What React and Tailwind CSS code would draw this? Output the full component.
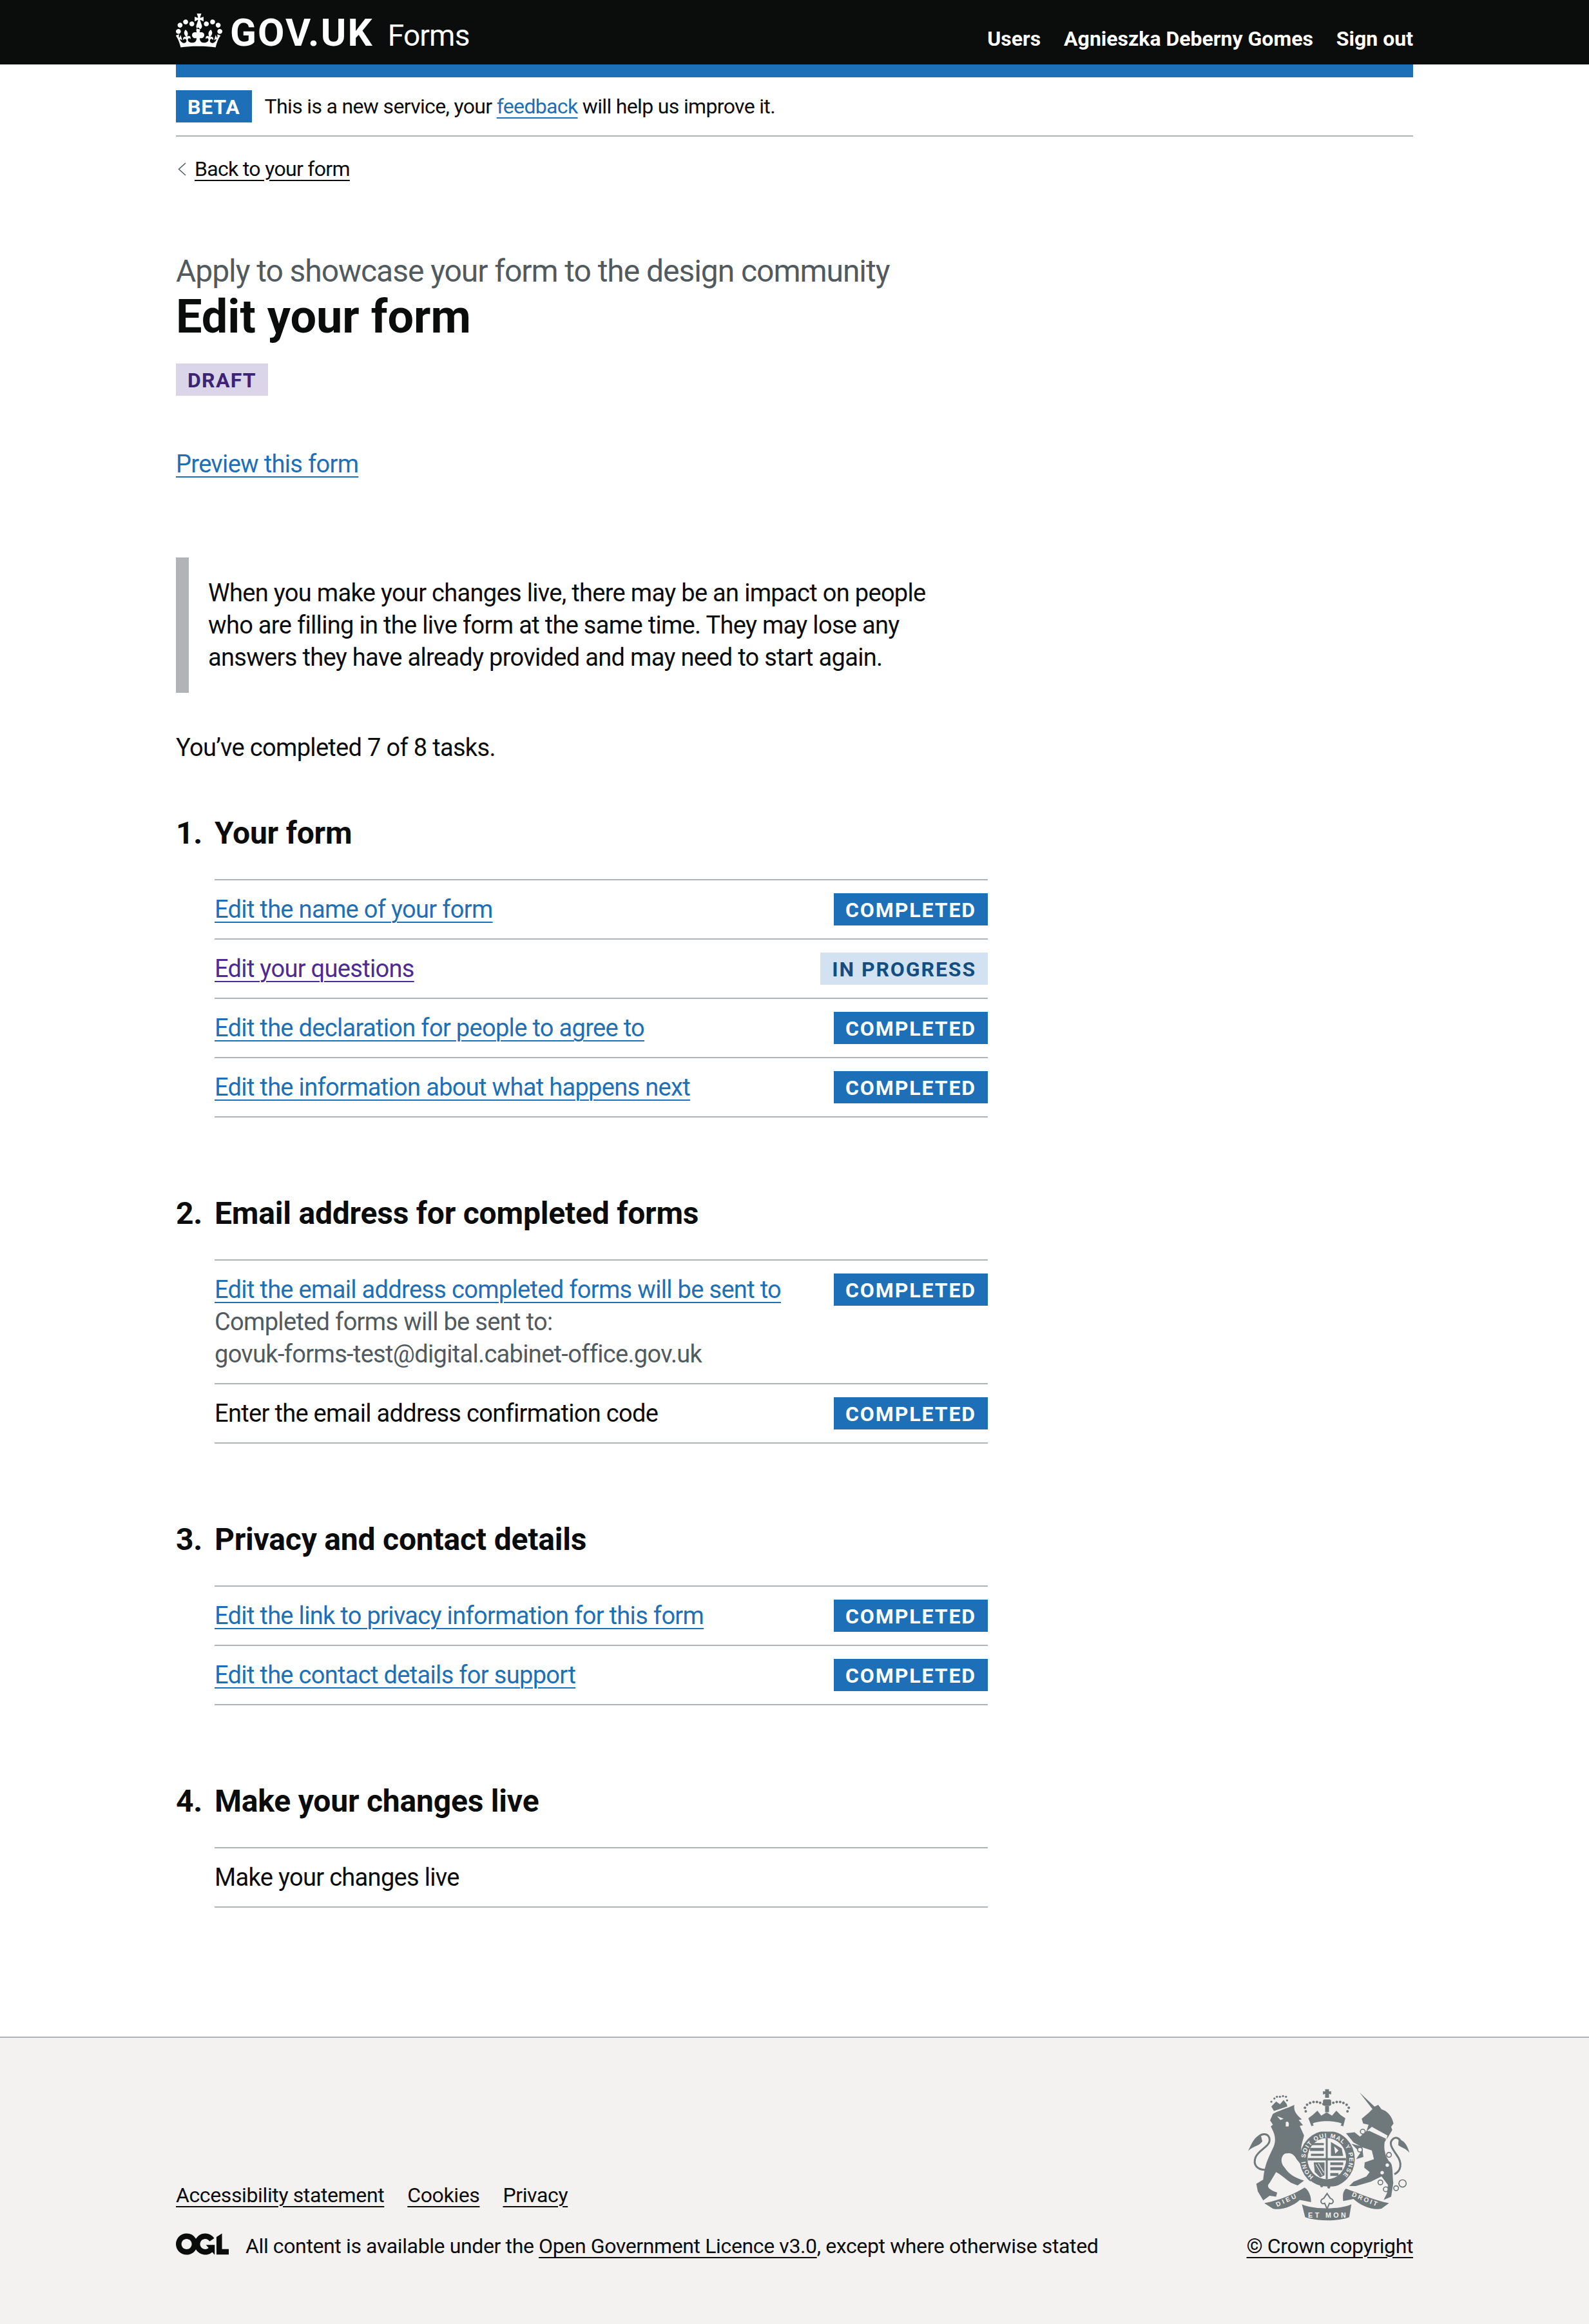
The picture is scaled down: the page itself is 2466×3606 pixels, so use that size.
import React from "react";

const Tag = ({ children, tone = "blue", track = "tracking-[1.9px]" }) => {
  const tones = {
    blue: "bg-[#1d70b8] text-white",
    light: "bg-[#d2e2f1] text-[#144e81]",
    purple: "bg-[#dbd5e9] text-[#3d2375]",
  };
  return (
    <strong className={"block h-[50px] shrink-0 px-[18px] pt-[7px] text-[32px] leading-[38px] font-bold uppercase " + track + " " + tones[tone]}>
      {children}
    </strong>
  );
};

const linkCls = "underline decoration-2 underline-offset-[6px]";

const sections = [
  {
    n: "1.",
    title: "Your form",
    tasks: [
      { text: "Edit the name of your form", link: true, tag: "Completed" },
      { text: "Edit your questions", link: true, visited: true, tag: "In progress", tone: "light" },
      { text: "Edit the declaration for people to agree to", link: true, tag: "Completed" },
      { text: "Edit the information about what happens next", link: true, tag: "Completed" },
    ],
  },
  {
    n: "2.",
    title: "Email address for completed forms",
    tasks: [
      {
        text: "Edit the email address completed forms will be sent to",
        link: true,
        tag: "Completed",
        hint: ["Completed forms will be sent to:", "govuk-forms-test@digital.cabinet-office.gov.uk"],
      },
      { text: "Enter the email address confirmation code", tag: "Completed" },
    ],
  },
  {
    n: "3.",
    title: "Privacy and contact details",
    tasks: [
      { text: "Edit the link to privacy information for this form", link: true, tag: "Completed" },
      { text: "Edit the contact details for support", link: true, tag: "Completed" },
    ],
  },
  {
    n: "4.",
    title: "Make your changes live",
    tasks: [{ text: "Make your changes live" }],
  },
];

const Crown = () => (
  <svg viewBox="0 0 132 97" width="72" height="53" className="shrink-0">
    <path
      fill="currentColor"
      fillRule="evenodd"
      d="M25 30.2c3.5 1.5 7.7-.2 9.1-3.7 1.5-3.6-.2-7.8-3.9-9.2-3.6-1.4-7.6.3-9.1 3.9-1.4 3.5.3 7.5 3.9 9zM9 39.5c3.6 1.5 7.8-.2 9.2-3.7 1.5-3.6-.2-7.8-3.9-9.1-3.6-1.5-7.6.2-9.1 3.8-1.4 3.5.3 7.5 3.8 9zM4.4 57.2c3.5 1.5 7.7-.2 9.1-3.8 1.5-3.6-.2-7.7-3.9-9.1-3.5-1.5-7.6.3-9.1 3.8-1.4 3.5.3 7.6 3.9 9.1zm38.3-21.4c3.5 1.5 7.7-.2 9.1-3.8 1.5-3.6-.2-7.7-3.9-9.1-3.6-1.5-7.6.3-9.1 3.8-1.3 3.6.4 7.7 3.9 9.1zm64.4-5.6c-3.6 1.5-7.8-.2-9.1-3.7-1.5-3.6.2-7.8 3.8-9.2 3.6-1.4 7.7.3 9.2 3.9 1.3 3.5-.4 7.5-3.9 9zm15.9 9.3c-3.6 1.5-7.7-.2-9.1-3.7-1.5-3.6.2-7.8 3.7-9.1 3.6-1.5 7.7.2 9.2 3.8 1.5 3.5-.3 7.5-3.8 9zm4.7 17.7c-3.6 1.5-7.8-.2-9.2-3.8-1.5-3.6.2-7.7 3.9-9.1 3.6-1.5 7.7.3 9.2 3.8 1.3 3.5-.4 7.6-3.9 9.1zM89.3 35.8c-3.6 1.5-7.8-.2-9.2-3.8-1.4-3.6.2-7.7 3.9-9.1 3.6-1.5 7.7.3 9.2 3.8 1.4 3.6-.3 7.7-3.9 9.1zM69.7 17.7l8.9 4.7V9.3l-8.9 2.8c-.2-.3-.5-.6-.9-.9L72.4 0H59.6l3.5 11.2c-.3.3-.6.5-.9.9l-8.8-2.8v13.1l8.8-4.7c.3.3.6.7.9.9l-5 15.4v.1c-.2.8-.4 1.6-.4 2.4 0 4.1 3.1 7.5 7 8.1h.2c.3 0 .7.1 1 .1.4 0 .7 0 1-.1h.2c4-.6 7.1-4.1 7.1-8.1 0-.8-.1-1.7-.4-2.4V34l-5.1-15.4c.4-.2.7-.6 1-.9zM66 92.8c16.9 0 32.8 1.1 47.1 3.2 4-16.9 8.9-26.7 14-33.5l-9.6-3.4c1 4.9 1.1 7.2 0 10.2-1.5-1.4-3-4.3-4.2-8.7L108.6 76c2.8-2 5-3.2 7.5-3.3-4.4 9.4-10 11.9-13.6 11.2-4.3-.8-6.3-4.6-5.6-7.9 1-4.7 5.7-5.9 8-.5 4.3-8.7-3-11.4-7.6-8.8 7.1-7.2 7.9-13.5 2.1-21.1-8 6.1-8.1 12.3-4.5 20.8-4.7-5.4-12.1-2.5-9.5 6.2 3.4-5.2 7.9-2 7.2 3.1-.6 4.3-6.4 7.8-13.5 7.2-10.3-.9-10.9-8-11.2-13 8.6 1.5 13-3 12.9-9.1-.1-6.2-5.5-9.3-13.5-7.2 2.3-6.2 2.1-10.1-4-14.1-6.1 4-6.3 7.9-4 14.1-8-2.1-13.4 1-13.5 7.2-.1 6.1 4.3 10.6 12.9 9.1-.3 5-.9 12.1-11.2 13-7.1.6-12.9-2.9-13.5-7.2-.7-5.1 3.8-8.3 7.2-3.1 2.7-8.7-4.8-11.6-9.4-6.2 3.5-8.5 3.4-14.7-4.6-20.8-5.8 7.6-5 13.9 2.2 21.1-4.7-2.6-11.9.1-7.7 8.8 2.3-5.5 7.1-4.2 8.1.5.7 3.3-1.3 7.1-5.7 7.9-3.5.7-9-1.8-13.5-11.2 2.5.1 4.7 1.3 7.5 3.3l-4.7-15.4c-1.2 4.4-2.7 7.2-4.3 8.7-1.1-3-.9-5.3 0-10.2l-9.5 3.4c5 6.9 9.9 16.7 14 33.5 14.8-2.1 30.8-3.2 47.7-3.2z"
    />
  </svg>
);

const Ogl = () => (
  <svg viewBox="0 0 483.2 195.7" width="82" height="34" className="shrink-0">
    <path
      fill="currentColor"
      d="M421.5 142.8V.1l-50.7 32.3v161.1h112.4v-50.7zm-122.3-9.6A47.12 47.12 0 0 1 221 97.8c0-26 21.1-47.1 47.1-47.1 16.7 0 31.4 8.7 39.7 21.8l42.7-27.2A97.63 97.63 0 0 0 268.1 0c-36.5 0-68.3 20.1-85.1 49.7A98 98 0 0 0 97.8 0C43.9 0 0 43.9 0 97.8s43.9 97.8 97.8 97.8c36.5 0 68.3-20.1 85.1-49.7a97.76 97.76 0 0 0 149.6 25.4l19.4 22.2h3v-87.8h-80l24.3 27.5zM97.8 145c-26 0-47.1-21.1-47.1-47.1s21.1-47.1 47.1-47.1 47.2 21 47.2 47S123.8 145 97.8 145"
    />
  </svg>
);

// royal arms, traced by hand from the picture
const Crest = () => {
  const ink = "#6f787b";
  const bg = "#f3f2f1";
  const f = "'Liberation Sans', sans-serif";
  const dots = [
    [438, 228], [434, 211], [444, 197], [458, 189], [474, 184], [490, 184], [505, 188], [520, 194],
    [632, 228], [638, 211], [628, 197], [613, 189], [598, 184], [582, 184], [566, 188], [550, 194],
  ];
  const lionDots = [[278, 183], [292, 168], [304, 160], [318, 160], [332, 157], [346, 160], [351, 177]];
  const rings = [[703, 322], [690, 406], [825, 430], [785, 558], [810, 590], [858, 585], [888, 563]];
  return (
    <svg viewBox="170 120 755 620" width="252" height="207" className="mr-[4px] shrink-0">
      {/* lion */}
      <path fill={ink} d="M285 240C310 225 350 215 385 198C380 225 395 245 420 265L405 268L425 292L410 296L430 340C425 365 410 395 420 430C435 445 445 470 440 480L415 475L395 450C380 420 360 420 340 425C320 440 320 470 340 490C360 520 385 535 430 550L400 572L370 560C340 540 320 520 300 510L270 560C255 575 260 590 305 605L300 625L270 620L240 642L215 600L208 565L240 545C245 500 250 470 285 400C300 370 300 340 275 298L285 290L272 270Z" />
      <path fill="none" stroke={ink} strokeWidth="9" d="M250 500C215 500 190 480 205 440C225 400 280 390 268 350C260 330 235 330 220 345" />
      <path fill={ink} d="M228 335C200 345 185 380 170 412C200 385 218 392 236 368Z" />
      <path fill={bg} d="M305 250L335 262L320 268ZM345 278C358 270 362 285 358 298L345 298Z" />
      <path fill={ink} d="M278 205L300 182L318 195L335 175L350 195L352 205L290 226Z" />
      {lionDots.map(([x, y], i) => (
        <circle key={i} cx={x} cy={y} r="5" fill={ink} />
      ))}
      {/* unicorn */}
      <path fill={ink} d="M688 140L758 206L775 198L790 218C815 225 840 250 846 285L835 300L840 315L822 345L805 370C800 400 805 430 825 460C845 470 840 510 845 560L835 625L800 640L815 610L820 570L790 530L740 555L670 575L640 575L660 555L720 530L735 510L710 490L712 465L755 450L745 410L700 395L660 372L625 330L665 325L690 345L720 320L730 290L705 285L698 262L730 235L748 217Z" />
      <path fill={ink} d="M650 378L700 392L706 440L672 450L692 420Z" />
      <path fill="none" stroke={ink} strokeWidth="9" d="M850 520C880 505 890 470 860 430C840 400 820 375 845 355C860 345 875 355 880 370" />
      <path fill={ink} d="M870 358C895 362 910 385 920 420C900 398 890 400 868 385Z" />
      <path fill={bg} d="M724 318L745 300L818 340L812 362Z" />
      <path fill="none" stroke={ink} strokeWidth="6" d="M730 320L810 358" />
      {rings.map(([x, y], i) => (
        <circle key={i} cx={x} cy={y} r={i === 6 ? 17 : 11} fill={bg} stroke={ink} strokeWidth="5" />
      ))}
      <circle cx="817" cy="478" r="8" fill={bg} />
      <circle cx="793" cy="513" r="8" fill={bg} />
      {/* garter and shield */}
      <ellipse cx="538" cy="450" rx="128" ry="132" fill={ink} />
      <ellipse cx="536" cy="448" rx="90" ry="96" fill={bg} />
      <path fill={ink} d="M531 352H540V445H625V456H540V544H531V456H447V445H531Z" />
      <path fill={ink} d="M465 375H522V385H465ZM458 398H522V412H458ZM462 425H522V435H462ZM555 370L605 400L612 435H555ZM552 465H612V478H552ZM552 488H608V502H552ZM552 515H590V528H552Z" />
      <path fill={bg} d="M570 390L590 410L575 425Z" />
      <path fill={ink} d="M475 465H525V525L505 535L480 510Z" />
      <path fill="none" stroke={bg} strokeWidth="3" d="M485 475L515 525M497 470L522 512" />
      <path id="garterRing" fill="none" d="M474 531A102 102 0 1 1 602 531" />
      <text fontFamily={f} fontWeight="700" fontSize="28" fill={bg}>
        <textPath href="#garterRing" textLength="490">HONI SOIT QUI MAL Y PENSE</textPath>
      </text>
      <path fill={bg} d="M460 550C500 585 570 585 630 560L628 570C570 600 500 600 465 575Z" />
      <circle cx="512" cy="574" r="7" fill={ink} />
      <circle cx="545" cy="580" r="7" fill={ink} />
      {/* crown */}
      <path fill={ink} d="M528 125H546V136L556 134V150L546 146V165H528V146L518 150V134L528 136Z" />
      <rect x="518" y="172" width="38" height="30" rx="8" fill={ink} />
      <rect x="528" y="202" width="18" height="30" fill={ink} />
      <path fill={ink} d="M450 260L470 245L492 225L510 248L535 232L560 248L580 225L600 245L622 260L612 298L465 298Z" />
      <path fill={bg} d="M470 285C500 270 570 270 605 285L600 294H475Z" />
      <path fill={bg} d="M465 296C500 286 570 286 610 296L612 322H460Z" />
      {dots.map(([x, y], i) => (
        <circle key={i} cx={x} cy={y} r="6" fill={ink} />
      ))}
      {/* motto */}
      <path fill={ink} d="M245 655C320 640 390 610 432 582C450 590 465 625 462 650L410 640C380 670 320 690 285 680Z" />
      <path fill={ink} d="M825 655C750 640 690 610 625 587C608 600 610 625 612 645L660 635C690 665 750 690 790 680Z" />
      <path fill={ink} d="M420 660C470 685 600 685 650 660L640 720C590 740 490 740 435 720Z" />
      <path fill="none" stroke={ink} strokeWidth="6" d="M537 610L552 632C575 638 565 665 548 655L537 682L526 655C509 665 499 638 522 632Z" />
      <text x="449" y="722" fontFamily={f} fontWeight="700" fontSize="32" fill={bg} textLength="175">ET MON</text>
      <text transform="rotate(-25 305 672)" x="305" y="672" fontFamily={f} fontWeight="700" fontSize="30" fill={bg} textLength="100">DIEU</text>
      <text transform="rotate(22 650 622)" x="650" y="622" fontFamily={f} fontWeight="700" fontSize="30" fill={bg} textLength="125">DROIT</text>
    </svg>
  );
};

const Section = ({ s, last }) => (
  <section className={last ? "mb-[100px]" : "mb-[119px]"}>
    <h2 className="flex h-[60px] mb-[41px] text-[48px] leading-[60px] font-bold tracking-[-0.2px]">
      <span className="w-[60px] shrink-0">{s.n}</span>
      <span>{s.title}</span>
    </h2>
    <ul className="ml-[60px] border-t-2 border-[#b1b4b6]">
      {s.tasks.map((t) => (
        <li key={t.text} className="flex justify-between gap-8 border-b-2 border-[#b1b4b6] py-5">
          <div className="min-h-[50px]">
            {t.link ? (
              <a href="#" className={linkCls + (t.visited ? " text-[#4c2c92]" : " text-[#1d70b8]")}>
                {t.text}
              </a>
            ) : (
              <span>{t.text}</span>
            )}
            {t.hint && t.hint.map((h) => (
              <div key={h} className="text-[#505a5f]">{h}</div>
            ))}
          </div>
          {t.tag && <Tag tone={t.tone}>{t.tag}</Tag>}
        </li>
      ))}
    </ul>
  </section>
);

export default function App() {
  return (
    <div className="min-h-[3606px] flex flex-col bg-white text-[#0b0c0c] text-[38px] leading-[50px] tracking-[-0.68px] font-['Roboto',sans-serif]">
      <header className="h-[100px] bg-[#0b0c0c] text-white">
        <div className="mx-auto flex h-full w-[1920px] items-start justify-between">
          <div className="flex items-start pt-[21px]">
            <Crown />
            <div className="ml-[12px] flex items-baseline">
              <span className="text-[60px] leading-[60px] font-bold tracking-[2.2px]">GOV.UK</span>
              <span className="ml-[22px] text-[46px] leading-[60px] tracking-[-0.8px]">Forms</span>
            </div>
          </div>
          <nav className="flex gap-[36px] pt-[40px] text-[32px] leading-[40px] font-bold tracking-normal">
            <a href="#">Users</a>
            <a href="#">Agnieszka Deberny Gomes</a>
            <a href="#">Sign out</a>
          </nav>
        </div>
      </header>

      <div className="mx-auto w-[1920px] flex-1">
        <div className="h-[20px] bg-[#1d70b8]" />
        <div className="flex items-start border-b-2 border-[#b1b4b6] pt-5 pb-5 text-[32px] leading-[50px] tracking-[-0.66px]">
          <Tag track="tracking-[0.8px]">Beta</Tag>
          <span className="ml-5">
            This is a new service, your <a href="#" className={linkCls + " text-[#1d70b8]"}>feedback</a> will help us improve it.
          </span>
        </div>

        <div className="mt-[25px] ml-[3px] flex h-[50px] items-center text-[32px] leading-[50px] tracking-[-0.68px]">
          <svg viewBox="0 0 13 21" width="13" height="21" className="mr-[13px]">
            <path d="M12 1L1.5 10.5 12 20" fill="none" stroke="#505a5f" strokeWidth="1.5" />
          </svg>
          <a href="#" className={linkCls}>Back to your form</a>
        </div>

        <main className="mt-[109px] w-[1260px]">
          <div className="text-[48px] leading-[50px] tracking-[-1.05px] text-[#505a5f]">Apply to showcase your form to the design community</div>
          <h1 className="mt-[6px] text-[72px] leading-[80px] font-bold tracking-normal">Edit your form</h1>
          <div className="mt-[32px] flex">
            <Tag tone="purple" track="tracking-[1.3px]">Draft</Tag>
          </div>
          <p className="mt-[81px]">
            <a href="#" className={linkCls + " text-[#1d70b8]"}>Preview this form</a>
          </p>
          <div className="mt-[120px] border-l-[20px] border-[#b1b4b6] py-[30px] pl-[30px] pr-[40px]">
            <p>
              When you make your changes live, there may be an impact on people who are filling in the live form at the same time. They may lose any answers they have already provided and may need to start again.
            </p>
          </div>
          <p className="mt-[60px] mb-[78px]">You’ve completed 7 of 8 tasks.</p>
          {sections.map((s, i) => (
            <Section key={s.n} s={s} last={i === sections.length - 1} />
          ))}
        </main>
      </div>

      <footer className="h-[446px] border-t-2 border-[#b1b4b6] bg-[#f3f2f1] text-[32px] leading-[40px] tracking-[-0.38px]">
        <div className="mx-auto flex w-[1920px] items-end justify-between pt-[78px]">
          <div>
            <div className="flex gap-[36px]">
              <a href="#" className={linkCls}>Accessibility statement</a>
              <a href="#" className={linkCls}>Cookies</a>
              <a href="#" className={linkCls}>Privacy</a>
            </div>
            <div className="mt-[39px] flex items-start">
              <Ogl />
              <span className="ml-[26px]">
                All content is available under the <a href="#" className={linkCls}>Open Government Licence v3.0</a>, except where otherwise stated
              </span>
            </div>
          </div>
          <div className="flex flex-col items-end">
            <Crest />
            <a href="#" className={"mt-[18px] " + linkCls}>© Crown copyright</a>
          </div>
        </div>
      </footer>
    </div>
  );
}
